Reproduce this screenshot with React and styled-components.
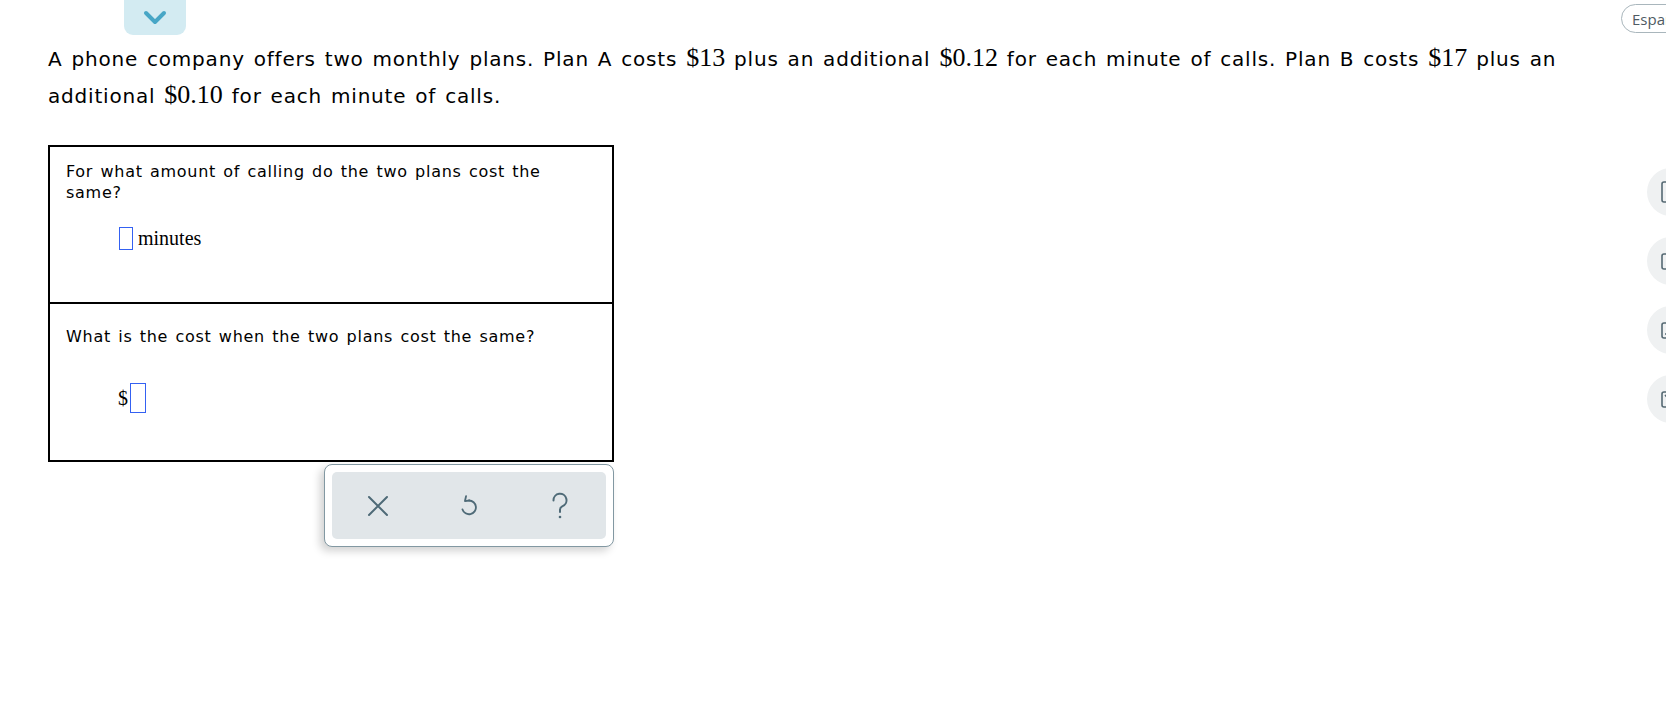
import React from "react";
import styled, { createGlobalStyle } from "styled-components";

const GlobalStyle = createGlobalStyle`
  html, body {
    margin: 0;
    padding: 0;
    background: #fff;
    overflow: hidden;
  }
  body {
    font-family: "DejaVu Sans", Verdana, sans-serif;
    color: #000;
  }
`;

const Page = styled.div`
  width: 100vw;
  height: 100vh;
  overflow: hidden;
  display: flex;
  flex-direction: column;
`;

const TopBar = styled.div`
  display: flex;
  justify-content: space-between;
  align-items: flex-start;
  height: 40px;
  padding-left: 124px;
`;

const ToggleTab = styled.button`
  width: 62px;
  height: 35px;
  border: none;
  padding: 0;
  background: #d3ebf2;
  border-radius: 0 0 9px 9px;
  display: flex;
  align-items: center;
  justify-content: center;
  cursor: pointer;
`;

const LangPill = styled.button`
  margin-top: 4px;
  margin-right: -37px;
  width: 82px;
  height: 29px;
  box-sizing: border-box;
  padding: 0 0 0 10px;
  text-align: left;
  background: #fff;
  border: 1.5px solid #a9b6bc;
  border-radius: 15px;
  font-family: "Open Sans", "Liberation Sans", sans-serif;
  font-size: 15px;
  color: #4f5b63;
  white-space: nowrap;
  overflow: hidden;
`;

const Body = styled.div`
  flex: 1;
  display: flex;
`;

const Main = styled.div`
  flex: 1;
  padding: 0 50px 0 48px;
`;

const Prompt = styled.p`
  margin: 0;
  font-size: 20px;
  line-height: 36px;
  letter-spacing: 0.8px;
  word-spacing: 1.8px;
  color: #000;
`;

const Num = styled.span`
  font-family: "Liberation Serif", "Times New Roman", serif;
  font-size: 26px;
  letter-spacing: 0;
`;

const AnswerBox = styled.div`
  width: 566px;
  box-sizing: border-box;
  margin-top: 31px;
  border: 2px solid #000;
`;

const Section = styled.div`
  padding: ${(p) => p.$top}px 16px ${(p) => p.$bottom}px;
  border-top: ${(p) => (p.$divided ? "2px solid #000" : "none")};
`;

const Question = styled.div`
  font-size: 16px;
  line-height: 21px;
  letter-spacing: 0.72px;
  word-spacing: 1.5px;
  max-width: 500px;
`;

const AnswerRow = styled.div`
  display: flex;
  align-items: center;
  margin-top: ${(p) => p.$gap}px;
  padding-left: ${(p) => p.$indent}px;
  font-family: "Liberation Serif", "Times New Roman", serif;
  font-size: 20px;
  gap: ${(p) => p.$space}px;
`;

const Blank = styled.span`
  display: inline-block;
  box-sizing: border-box;
  width: ${(p) => p.$w}px;
  height: ${(p) => p.$h}px;
  border: 1.5px solid #3461f2;
`;

const ToolRow = styled.div`
  width: 566px;
  display: flex;
  justify-content: flex-end;
  margin-top: 2px;
`;

const Toolbar = styled.div`
  width: 290px;
  height: 83px;
  box-sizing: border-box;
  padding: 7px;
  background: #fff;
  border: 1.5px solid #8298a2;
  border-radius: 8px;
  box-shadow: -4px 4px 8px rgba(0, 0, 0, 0.18);
`;

const ToolTray = styled.div`
  height: 100%;
  background: #e1e6e9;
  border-radius: 5px;
  display: grid;
  grid-template-columns: repeat(3, 1fr);
  align-items: center;
  justify-items: center;
`;

const ToolButton = styled.button`
  border: none;
  background: transparent;
  padding: 0;
  display: flex;
  align-items: center;
  justify-content: center;
  cursor: pointer;
  color: #4e6a77;
`;

const Rail = styled.div`
  width: 48px;
  margin-right: -29px;
  padding-top: 128px;
  display: flex;
  flex-direction: column;
  gap: 21px;
`;

const RailButton = styled.div`
  width: 48px;
  height: 48px;
  flex-shrink: 0;
  border-radius: 50%;
  background: #eff1f2;
  display: flex;
  align-items: center;
  padding-left: 14px;
  box-sizing: border-box;
  color: #566973;
`;

const Chevron = () => (
  <svg width="24" height="16" viewBox="0 0 24 16">
    <path d="M3 3 L12 12 L21 3" fill="none" stroke="#47a6c6" strokeWidth="4" strokeLinecap="round" strokeLinejoin="round" />
  </svg>
);

const CloseIcon = () => (
  <svg width="22" height="22" viewBox="0 0 22 22">
    <path d="M2 2 L20 20 M20 2 L2 20" stroke="currentColor" strokeWidth="2" strokeLinecap="round" />
  </svg>
);

const UndoIcon = () => (
  <svg width="22" height="26" viewBox="0 0 24 28">
    <path d="M12 8 A7.5 7.5 0 1 1 4.9 17.8" fill="none" stroke="currentColor" strokeWidth="2" strokeLinecap="round" />
    <path d="M8.8 3.2 L7.6 8.6 L12.4 8" fill="none" stroke="currentColor" strokeWidth="2" strokeLinecap="round" strokeLinejoin="round" />
  </svg>
);

const HelpIcon = () => (
  <svg width="22" height="28" viewBox="0 0 22 28">
    <path d="M4.5 8.5 A6.5 6.5 0 1 1 13.2 14.4 C11.6 15.2 11 16.2 11 17.8 V20" fill="none" stroke="currentColor" strokeWidth="2" strokeLinecap="round" />
    <circle cx="11" cy="25" r="1.3" fill="currentColor" />
  </svg>
);

const RailIcon = ({ kind }) => (
  <svg width="22" height="22" viewBox="0 0 22 22">
    <rect x="1" y={kind === "calc" ? 1 : 4} width="18" height={kind === "calc" ? 20 : 15} rx="2" fill="none" stroke="currentColor" strokeWidth="1.6" />
    {kind === "doc" && <path d="M4 15 H8" stroke="currentColor" strokeWidth="1.4" />}
    {kind === "check" && <path d="M4 7 L8 11 L14 4" fill="none" stroke="currentColor" strokeWidth="1.6" />}
  </svg>
);

export default function App() {
  return (
    <Page>
      <GlobalStyle />
      <TopBar>
        <ToggleTab aria-label="Collapse">
          <Chevron />
        </ToggleTab>
        <LangPill>Español</LangPill>
      </TopBar>
      <Body>
        <Main>
          <Prompt>
            A phone company offers two monthly plans. Plan A costs <Num>$13</Num> plus an additional{" "}
            <Num>$0.12</Num> for each minute of calls. Plan B costs <Num>$17</Num> plus an additional{" "}
            <Num>$0.10</Num> for each minute of calls.
          </Prompt>
          <AnswerBox>
            <Section $top={14} $bottom={52}>
              <Question>For what amount of calling do the two plans cost the same?</Question>
              <AnswerRow $gap={24} $indent={53} $space={5}>
                <Blank $w={14} $h={23} />
                <span>minutes</span>
              </AnswerRow>
            </Section>
            <Section $divided $top={22} $bottom={47}>
              <Question>What is the cost when the two plans cost the same?</Question>
              <AnswerRow $gap={36} $indent={52} $space={2}>
                <span>$</span>
                <Blank $w={16} $h={30} />
              </AnswerRow>
            </Section>
          </AnswerBox>
          <ToolRow>
            <Toolbar>
              <ToolTray>
                <ToolButton aria-label="Clear"><CloseIcon /></ToolButton>
                <ToolButton aria-label="Undo"><UndoIcon /></ToolButton>
                <ToolButton aria-label="Help"><HelpIcon /></ToolButton>
              </ToolTray>
            </Toolbar>
          </ToolRow>
        </Main>
        <Rail>
          <RailButton><RailIcon kind="calc" /></RailButton>
          <RailButton><RailIcon kind="box" /></RailButton>
          <RailButton><RailIcon kind="doc" /></RailButton>
          <RailButton><RailIcon kind="check" /></RailButton>
        </Rail>
      </Body>
    </Page>
  );
}
